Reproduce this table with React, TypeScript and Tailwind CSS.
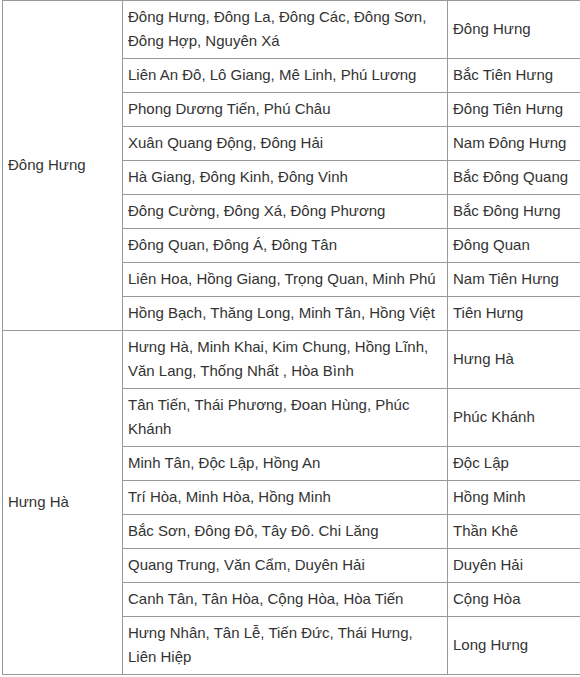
const groups: { name: string; rows: [string, string][] }[] = [
  {
    name: "Đông Hưng",
    rows: [
      ["Đông Hưng, Đông La, Đông Các, Đông Sơn, Đông Hợp, Nguyên Xá", "Đông Hưng"],
      ["Liên An Đô, Lô Giang, Mê Linh, Phú Lương", "Bắc Tiên Hưng"],
      ["Phong Dương Tiến, Phú Châu", "Đông Tiên Hưng"],
      ["Xuân Quang Động, Đông Hải", "Nam Đông Hưng"],
      ["Hà Giang, Đông Kinh, Đông Vinh", "Bắc Đông Quang"],
      ["Đông Cường, Đông Xá, Đông Phương", "Bắc Đông Hưng"],
      ["Đông Quan, Đông Á, Đông Tân", "Đông Quan"],
      ["Liên Hoa, Hồng Giang, Trọng Quan, Minh Phú", "Nam Tiên Hưng"],
      ["Hồng Bạch, Thăng Long, Minh Tân, Hồng Việt", "Tiên Hưng"],
    ],
  },
  {
    name: "Hưng Hà",
    rows: [
      ["Hưng Hà, Minh Khai, Kim Chung, Hồng Lĩnh, Văn Lang, Thống Nhất , Hòa Bình", "Hưng Hà"],
      ["Tân Tiến, Thái Phương, Đoan Hùng, Phúc Khánh", "Phúc Khánh"],
      ["Minh Tân, Độc Lập, Hồng An", "Độc Lập"],
      ["Trí Hòa, Minh Hòa, Hồng Minh", "Hồng Minh"],
      ["Bắc Sơn, Đông Đô, Tây Đô. Chi Lăng", "Thần Khê"],
      ["Quang Trung, Văn Cẩm, Duyên Hải", "Duyên Hải"],
      ["Canh Tân, Tân Hòa, Cộng Hòa, Hòa Tiến", "Cộng Hòa"],
      ["Hưng Nhân, Tân Lễ, Tiến Đức, Thái Hưng, Liên Hiệp", "Long Hưng"],
    ],
  },
];

const cell = "border border-[#999] px-[5px] pt-[4px] pb-[5px] align-middle";

export default function App() {
  return (
    <div className="min-h-screen bg-white pl-[2px] overflow-hidden">
      <table
        className="border-collapse text-[15px] leading-6 text-[#333] w-[586px] table-fixed"
        style={{ fontFamily: '"Liberation Sans", Arial, sans-serif' }}
      >
        <colgroup>
          <col className="w-[120px]" />
          <col className="w-[325px]" />
          <col />
        </colgroup>
        <tbody>
          {groups.map((g) =>
            g.rows.map((r, i) => (
              <tr key={g.name + i}>
                {i === 0 && (
                  <td rowSpan={g.rows.length} className={cell}>
                    {g.name}
                  </td>
                )}
                <td className={cell}>{r[0]}</td>
                <td className={cell}>{r[1]}</td>
              </tr>
            ))
          )}
        </tbody>
      </table>
    </div>
  );
}
